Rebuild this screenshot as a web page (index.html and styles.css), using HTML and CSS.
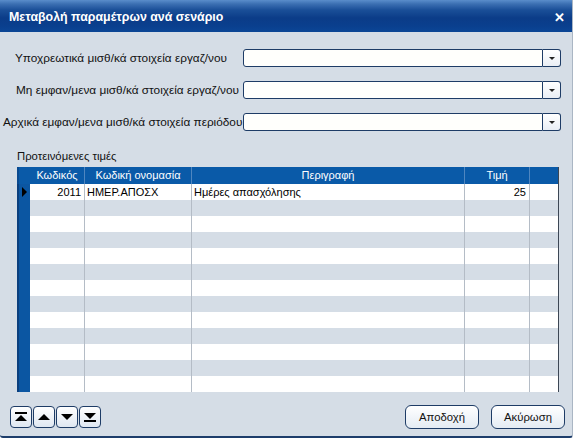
FILE: index.html
```html
<!DOCTYPE html>
<html>
<head>
<meta charset="utf-8">
<link rel="stylesheet" href="styles.css">
</head>
<body>
<div class="window">
  <div class="titlebar">
    <span class="title">Μεταβολή παραμέτρων ανά σενάριο</span>
    <span class="close">✕</span>
  </div>
  <div class="content">
    <div class="form">
      <div class="row">
        <span class="label l1">Υποχρεωτικά μισθ/κά στοιχεία εργαζ/νου</span>
        <div class="combo"><div class="combo-field"></div><div class="combo-btn"><span class="arrow"></span></div></div>
      </div>
      <div class="row">
        <span class="label l2">Μη εμφαν/μενα μισθ/κά στοιχεία εργαζ/νου</span>
        <div class="combo"><div class="combo-field"></div><div class="combo-btn"><span class="arrow"></span></div></div>
      </div>
      <div class="row">
        <span class="label l3">Αρχικά εμφαν/μενα μισθ/κά στοιχεία περιόδου</span>
        <div class="combo"><div class="combo-field"></div><div class="combo-btn"><span class="arrow"></span></div></div>
      </div>
    </div>
    <div class="section">Προτεινόμενες τιμές</div>
    <div class="grid">
      <div class="grow head">
        <div class="ind"></div>
        <div class="c">Κωδικός</div>
        <div class="c">Κωδική ονομασία</div>
        <div class="c">Περιγραφή</div>
        <div class="c">Τιμή</div>
        <div class="c"></div>
      </div>
      <div class="grow data w">
        <div class="ind"><span class="ptr"></span></div>
        <div class="c r">2011</div>
        <div class="c">ΗΜΕΡ.ΑΠΟΣΧ</div>
        <div class="c">Ημέρες απασχόλησης</div>
        <div class="c r">25</div>
        <div class="c"></div>
      </div>
      <div class="grow data g"><div class="ind"></div><div class="c"></div><div class="c"></div><div class="c"></div><div class="c"></div><div class="c"></div></div>
      <div class="grow data w"><div class="ind"></div><div class="c"></div><div class="c"></div><div class="c"></div><div class="c"></div><div class="c"></div></div>
      <div class="grow data g"><div class="ind"></div><div class="c"></div><div class="c"></div><div class="c"></div><div class="c"></div><div class="c"></div></div>
      <div class="grow data w"><div class="ind"></div><div class="c"></div><div class="c"></div><div class="c"></div><div class="c"></div><div class="c"></div></div>
      <div class="grow data g"><div class="ind"></div><div class="c"></div><div class="c"></div><div class="c"></div><div class="c"></div><div class="c"></div></div>
      <div class="grow data w"><div class="ind"></div><div class="c"></div><div class="c"></div><div class="c"></div><div class="c"></div><div class="c"></div></div>
      <div class="grow data g"><div class="ind"></div><div class="c"></div><div class="c"></div><div class="c"></div><div class="c"></div><div class="c"></div></div>
      <div class="grow data w"><div class="ind"></div><div class="c"></div><div class="c"></div><div class="c"></div><div class="c"></div><div class="c"></div></div>
      <div class="grow data g"><div class="ind"></div><div class="c"></div><div class="c"></div><div class="c"></div><div class="c"></div><div class="c"></div></div>
      <div class="grow data w"><div class="ind"></div><div class="c"></div><div class="c"></div><div class="c"></div><div class="c"></div><div class="c"></div></div>
      <div class="grow data g"><div class="ind"></div><div class="c"></div><div class="c"></div><div class="c"></div><div class="c"></div><div class="c"></div></div>
      <div class="grow data w"><div class="ind"></div><div class="c"></div><div class="c"></div><div class="c"></div><div class="c"></div><div class="c"></div></div>
    </div>
    <div class="footer">
      <div class="nav">
        <div class="nbtn"><svg width="14" height="12" viewBox="0 0 14 12"><rect x="1" y="1" width="12" height="2" fill="#000"/><polygon points="1,10 13,10 7,4" fill="#000"/></svg></div>
        <div class="nbtn"><svg width="14" height="12" viewBox="0 0 14 12"><polygon points="1,9 13,9 7,3" fill="#000"/></svg></div>
        <div class="nbtn"><svg width="14" height="12" viewBox="0 0 14 12"><polygon points="1,3 13,3 7,9" fill="#000"/></svg></div>
        <div class="nbtn"><svg width="14" height="12" viewBox="0 0 14 12"><polygon points="1,2 13,2 7,8" fill="#000"/><rect x="1" y="9" width="12" height="2" fill="#000"/></svg></div>
      </div>
      <div class="actions">
        <div class="btn">Αποδοχή</div>
        <div class="btn">Ακύρωση</div>
      </div>
    </div>
  </div>
</div>
</body>
</html>
```
FILE: styles.css
```css
html, body {
  margin: 0;
  padding: 0;
  background: #ffffff;
}
body {
  font-family: "Liberation Sans", Arial, sans-serif;
  font-size: 11px;
  color: #000;
}
.window {
  width: 573px;
  height: 438px;
  background: #d5dde6;
  border-bottom: 2px solid #1d3d6b;
  border-right: 1px solid #aab6c4;
  box-sizing: border-box;
  border-radius: 0 0 3px 3px;
  display: flex;
  flex-direction: column;
}
.titlebar {
  height: 32px;
  flex: none;
  background: linear-gradient(#5a8dcb 0px, #3b6fb2 4px, #1a4f98 10px, #0b3c88 18px, #0a3f8e 26px, #0b4696 32px);
  display: flex;
  align-items: center;
  justify-content: space-between;
  padding: 0 7px 0 9px;
  box-sizing: border-box;
}
.title {
  color: #fff;
  font-weight: bold;
  font-size: 12.4px;
  padding-top: 2px;
}
.close {
  color: #fff;
  font-weight: bold;
  font-size: 13px;
  padding-top: 3px;
}
.content {
  flex: 1;
  display: flex;
  flex-direction: column;
}
.form {
  padding-top: 17px;
  display: flex;
  flex-direction: column;
  gap: 14px;
}
.row {
  display: flex;
  align-items: center;
  height: 18px;
}
.label {
  width: 243px;
  box-sizing: border-box;
  white-space: nowrap;
  font-size: 11.8px;
  color: #111;
}
.l1 { padding-left: 15px; }
.l2 { padding-left: 16px; }
.l3 { padding-left: 3px; }
.combo {
  width: 318px;
  height: 18px;
  display: flex;
}
.combo-field {
  flex: 1;
  background: #fffffc;
  border: 1px solid #1e3c66;
  border-radius: 3px 0 0 3px;
}
.combo-btn {
  width: 17px;
  background: linear-gradient(#ffffff, #e9eef5);
  border: 1px solid #1e3c66;
  border-left: none;
  border-radius: 0 3px 3px 0;
  display: flex;
  align-items: center;
  justify-content: center;
}
.arrow {
  width: 0;
  height: 0;
  border-left: 3px solid transparent;
  border-right: 3px solid transparent;
  border-top: 3px solid #222;
}
.section {
  margin-top: 19px;
  padding-left: 17px;
  height: 17px;
  font-size: 11.3px;
  color: #111;
}
.grid {
  margin-left: 17px;
  width: 542px;
  border-right: 1px solid #3c4654;
  box-sizing: border-box;
}
.grow {
  display: grid;
  grid-template-columns: 13px 55px 107px 273px 65px 1fr;
  height: 16px;
}
.grow.head {
  height: 17px;
  background: #0a5aa8;
  color: #fff;
}
.grow.head .c {
  text-align: center;
  border-right: 1px solid #4f86c0;
  line-height: 17px;
}
.grow.head .c:last-child { border-right: none; }
.ind {
  background: #0b56a2;
  border-left: 2px solid #0a3f7e;
  box-sizing: border-box;
  display: flex;
  align-items: center;
  justify-content: center;
}
.head .ind { background: #0a5aa8; border-left: 2px solid #0a4a90; }
.c {
  overflow: hidden;
  white-space: nowrap;
  box-sizing: border-box;
  padding: 0 2px;
  line-height: 16px;
}
.data .c {
  border-right: 1px solid #b4bcc6;
}
.data .c:last-child { border-right: none; }
.data.w { background: #ffffff; }
.data.g { background: #d5dde6; }
.data .c.r { text-align: right; padding-right: 3px; }
.ptr {
  width: 0;
  height: 0;
  border-top: 5px solid transparent;
  border-bottom: 5px solid transparent;
  border-left: 5px solid #000;
  margin-right: 1px;
}
.footer {
  display: flex;
  justify-content: space-between;
  align-items: center;
  padding: 13px 7px 0 10px;
}
.nav {
  display: flex;
  gap: 1px;
}
.nbtn {
  width: 22px;
  height: 22px;
  box-sizing: border-box;
  border: 1px solid #1e3c66;
  border-radius: 4px;
  background: linear-gradient(#ffffff, #dfe7f1);
  display: flex;
  align-items: center;
  justify-content: center;
}
.actions {
  display: flex;
  gap: 12px;
}
.btn {
  width: 74px;
  height: 24px;
  box-sizing: border-box;
  border: 1px solid #1e3c66;
  border-radius: 6px;
  background: linear-gradient(#ffffff, #e4ebf3);
  display: flex;
  align-items: center;
  justify-content: center;
  font-size: 11.3px;
  color: #111;
}
```
